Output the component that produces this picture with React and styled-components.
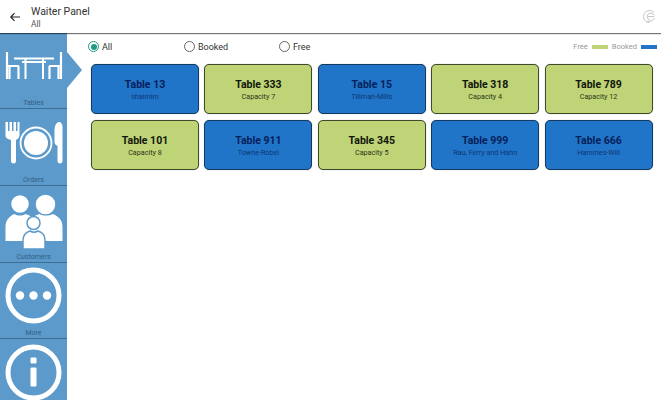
import styled, { createGlobalStyle } from 'styled-components'

const Global = createGlobalStyle`
  html, body {
    margin: 0;
    height: 100%;
    background: #fff;
    overflow: hidden;
  }
  body {
    font-family: Roboto, "Liberation Sans", sans-serif;
  }
`

const Page = styled.div`
  display: flex;
  flex-direction: column;
  width: 661px;
  height: 400px;
  overflow: hidden;
`

const Header = styled.header`
  display: flex;
  align-items: center;
  flex: 0 0 33px;
  height: 33px;
  padding: 0 6px 0 10px;
  box-sizing: border-box;
  background: #fff;
  box-shadow: 0 1px 1px rgba(0, 0, 0, .55);
  position: relative;
  z-index: 2;
`

const BackButton = styled.div`
  display: flex;
  width: 10px;
  margin-right: 11px;
`

const HeaderText = styled.div`
  display: flex;
  flex-direction: column;
  flex: 1;
  margin-top: 2px;
`

const Title = styled.div`
  font-size: 10.5px;
  line-height: 14px;
  color: #333;
`

const Subtitle = styled.div`
  font-size: 8.5px;
  line-height: 11px;
  color: #555;
`

const Body = styled.div`
  display: flex;
  flex: 1;
  min-height: 0;
`

const Sidebar = styled.nav`
  display: flex;
  flex-direction: column;
  flex: 0 0 67px;
  width: 67px;
  background: #5b9acb;
  position: relative;
`

const Pointer = styled.div`
  position: absolute;
  left: 67px;
  top: 19px;
  width: 0;
  height: 0;
  border-top: 18px solid transparent;
  border-bottom: 18px solid transparent;
  border-left: 15px solid #5b9acb;
`

const NavItem = styled.div`
  display: flex;
  flex-direction: column;
  align-items: center;
  flex: 0 0 ${props => props.$height}px;
  height: ${props => props.$height}px;
  box-sizing: border-box;
  padding-top: ${props => props.$top}px;
  border-bottom: ${props => props.$last ? '0' : '1px solid #3d6f96'};
  overflow: hidden;
`

const NavIcon = styled.svg`
  display: block;
  flex: 0 0 auto;
`

const NavLabel = styled.div`
  margin-top: auto;
  font-size: 7px;
  line-height: 9px;
  color: #2f5f85;
`

const Content = styled.main`
  display: flex;
  flex-direction: column;
  flex: 1;
  min-width: 0;
  padding: 7px 4px 0 24px;
`

const FilterBar = styled.div`
  display: flex;
  align-items: center;
  height: 13px;
  margin-left: -3px;
  margin-bottom: 11px;
`

const RadioOption = styled.div`
  display: flex;
  align-items: center;
  gap: 3px;
  width: ${props => props.$width}px;
  font-size: 9px;
  color: #333;
`

const RadioCircle = styled.span`
  display: flex;
  align-items: center;
  justify-content: center;
  width: 11px;
  height: 11px;
  box-sizing: border-box;
  border-radius: 50%;
  border: 1px solid ${props => props.$checked ? '#1f9b80' : '#666'};

  &::after {
    content: '';
    display: ${props => props.$checked ? 'block' : 'none'};
    width: 6px;
    height: 6px;
    border-radius: 50%;
    background: #1f9b80;
  }
`

const Legend = styled.div`
  display: flex;
  align-items: center;
  margin-left: auto;
  gap: 4px;
  font-size: 7.5px;
  color: #9a9a9a;
`

const LegendSwatch = styled.span`
  display: block;
  width: 16px;
  height: 4px;
  background: ${props => props.$color};
`

const Grid = styled.div`
  display: grid;
  grid-template-columns: repeat(5, 108px);
  grid-auto-rows: 50px;
  column-gap: 5.4px;
  row-gap: 6px;
`

const Card = styled.div`
  display: flex;
  flex-direction: column;
  align-items: center;
  justify-content: center;
  box-sizing: border-box;
  padding-top: 2px;
  border-radius: 5px;
  border: 1.5px solid ${props => props.$booked ? '#123a63' : '#3f4a2a'};
  background: ${props => props.$booked ? '#2075c8' : '#bfd377'};
  color: ${props => props.$booked ? '#06205a' : '#10160a'};
  box-shadow: 0 0 1px rgba(0, 0, 0, .4);
`

const CardTitle = styled.div`
  font-size: 10.5px;
  line-height: 14px;
  font-weight: 700;
`

const CardInfo = styled.div`
  font-size: 7.2px;
  line-height: 10px;
  color: ${props => props.$booked ? '#0e3674' : '#2c3517'};
`

const tables = [
  { name: 'Table 13', info: 'shaimim', booked: true },
  { name: 'Table 333', info: 'Capacity 7' },
  { name: 'Table 15', info: 'Tillman-Mills', booked: true },
  { name: 'Table 318', info: 'Capacity 4' },
  { name: 'Table 789', info: 'Capacity 12' },
  { name: 'Table 101', info: 'Capacity 8' },
  { name: 'Table 911', info: 'Towne-Robel', booked: true },
  { name: 'Table 345', info: 'Capacity 5' },
  { name: 'Table 999', info: 'Rau, Ferry and Hahn', booked: true },
  { name: 'Table 666', info: 'Hammes-Will', booked: true },
]

function TablesIcon() {
  return (
    <NavIcon width="58" height="28" viewBox="0 0 58 28" fill="none" stroke="#fff" strokeWidth="2">
      <path d="M2 0v27M2 14h12M4.500 15v12M13.500 14v13" strokeWidth="2.200" />
      <path d="M56 0v27M56 14H44M53.500 15v12M44.500 14v13" strokeWidth="2.200" />
      <path d="M9 6.500h40" />
      <path d="M20.500 7v20M38 7v20M17 10h24" />
    </NavIcon>
  )
}

function OrdersIcon() {
  return (
    <NavIcon width="58" height="42" viewBox="0 0 58 42" fill="#fff">
      <path d="M.5 0h2.500v9h1.500V0h2.500v9h1.500V0h2.500v9h1.500V0h2v13c0 3-2 4-3.500 5v21c0 1.500-.8 2.500-2.500 2.500s-2.500-1-2.500-2.500V18C2.500 17 .5 16 .5 13z" />
      <circle cx="31" cy="21" r="15.500" fill="none" stroke="#fff" strokeWidth="1.800" />
      <circle cx="31" cy="21" r="12" />
      <path d="M54 0c2 0 3.500 2 3.500 5v34c0 1.500-1 2.500-2.500 2.500s-2.500-1-2.500-2.500V24c-1.500-1-3-2-3-4V8c0-4 2-8 4.500-8z" />
    </NavIcon>
  )
}

function CustomersIcon() {
  return (
    <NavIcon width="58" height="56" viewBox="0 0 58 56" fill="#fff" stroke="#5b9acb" strokeWidth="1.500">
      <circle cx="15" cy="10" r="9.500" />
      <circle cx="40.500" cy="10.500" r="10.500" />
      <path d="M.5 47V33c0-7 4-11 9-13 3 2 8 2 11 0 3 .8 5 2 7 4 2-2 4-3.200 7-4 3 2 10 2 13 0 6 2 10 6 10 13v14z" stroke="none" />
      <circle cx="28.500" cy="29" r="6.500" />
      <path d="M18 55v-8c0-6 3-9 7-10 2.500 1.500 5.500 1.500 8 0 4 1 7 4 7 10v8z" />
    </NavIcon>
  )
}

function MoreIcon() {
  return (
    <NavIcon width="57" height="57" viewBox="0 0 57 57" fill="#fff">
      <circle cx="28.500" cy="28.500" r="25.500" fill="none" stroke="#fff" strokeWidth="5" />
      <circle cx="15" cy="28.500" r="4.200" />
      <circle cx="28.500" cy="28.500" r="4.200" />
      <circle cx="42" cy="28.500" r="4.200" />
    </NavIcon>
  )
}

function InfoIcon() {
  return (
    <NavIcon width="57" height="57" viewBox="0 0 57 57" fill="#fff">
      <circle cx="28.500" cy="28.500" r="25.500" fill="none" stroke="#fff" strokeWidth="5" />
      <rect x="25.500" y="13.500" width="6" height="6" rx="1" />
      <rect x="25.500" y="23.500" width="6" height="19" rx="1" />
    </NavIcon>
  )
}

function App() {
  return (
    <Page>
      <Global />
      <Header>
        <BackButton>
          <svg width="10" height="10" viewBox="0 0 10 10" fill="none" stroke="#222" strokeWidth="1.200">
            <path d="M10 5H1M4.500 1.200L.8 5l3.700 3.800" />
          </svg>
        </BackButton>
        <HeaderText>
          <Title>Waiter Panel</Title>
          <Subtitle>All</Subtitle>
        </HeaderText>
        <svg width="13" height="13" viewBox="0 0 13 13" fill="none" stroke="#c4c4c4" strokeWidth="1">
          <path d="M12 2.500A6 6 0 1 0 7 12.500M12 5.500A3.500 3.500 0 1 0 8 10M4.500 11.500C8 12 11 11 12.500 8M6 6.500h6" />
        </svg>
      </Header>
      <Body>
        <Sidebar>
          <Pointer />
          <NavItem $height={76} $top={19}>
            <TablesIcon />
            <NavLabel>Tables</NavLabel>
          </NavItem>
          <NavItem $height={77} $top={13}>
            <OrdersIcon />
            <NavLabel>Orders</NavLabel>
          </NavItem>
          <NavItem $height={77} $top={8}>
            <CustomersIcon />
            <NavLabel>Customers</NavLabel>
          </NavItem>
          <NavItem $height={76} $top={4}>
            <MoreIcon />
            <NavLabel>More</NavLabel>
          </NavItem>
          <NavItem $height={62} $top={5} $last>
            <InfoIcon />
          </NavItem>
        </Sidebar>
        <Content>
          <FilterBar>
            <RadioOption $width={96}>
              <RadioCircle $checked />
              All
            </RadioOption>
            <RadioOption $width={95}>
              <RadioCircle />
              Booked
            </RadioOption>
            <RadioOption $width={60}>
              <RadioCircle />
              Free
            </RadioOption>
            <Legend>
              Free
              <LegendSwatch $color="#bfd377" />
              Booked
              <LegendSwatch $color="#2075c8" />
            </Legend>
          </FilterBar>
          <Grid>
            {tables.map(table => (
              <Card key={table.name} $booked={table.booked}>
                <CardTitle>{table.name}</CardTitle>
                <CardInfo $booked={table.booked}>{table.info}</CardInfo>
              </Card>
            ))}
          </Grid>
        </Content>
      </Body>
    </Page>
  )
}

export default App
